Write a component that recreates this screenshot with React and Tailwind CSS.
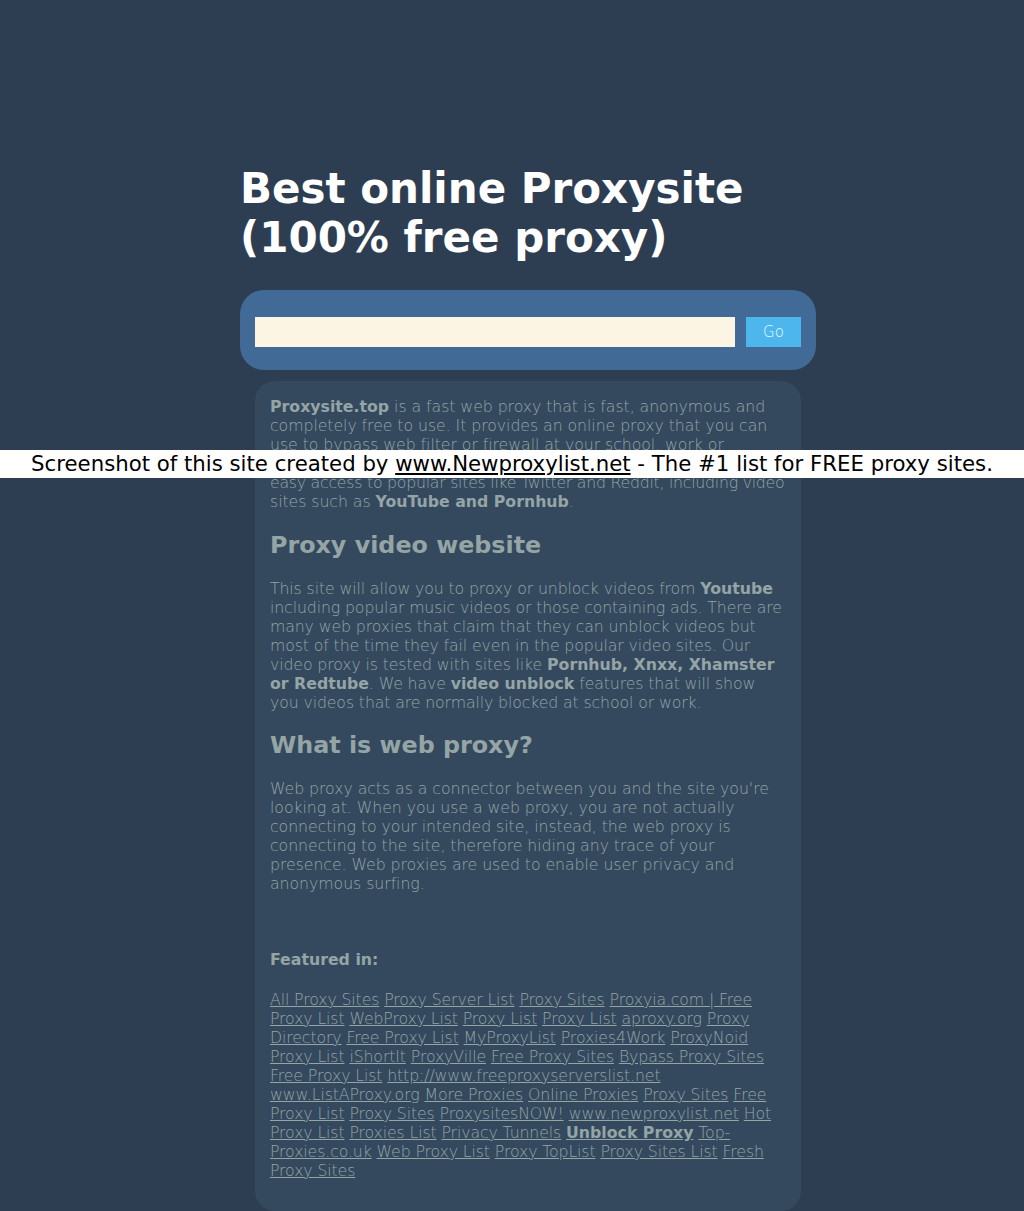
import React from 'react';

const links = [
  'All Proxy Sites', 'Proxy Server List', 'Proxy Sites', 'Proxyia.com | Free Proxy List',
  'WebProxy List', 'Proxy List', 'Proxy List', 'aproxy.org', 'Proxy Directory',
  'Free Proxy List', 'MyProxyList', 'Proxies4Work', 'ProxyNoid Proxy List', 'iShortIt',
  'ProxyVille', 'Free Proxy Sites', 'Bypass Proxy Sites', 'Free Proxy List',
  'http://www.freeproxyserverslist.net', 'www.ListAProxy.org', 'More Proxies',
  'Online Proxies', 'Proxy Sites', 'Free Proxy List', 'Proxy Sites', 'ProxysitesNOW!',
  'www.newproxylist.net', 'Hot Proxy List', 'Proxies List', 'Privacy Tunnels',
  'Unblock Proxy', 'Top-Proxies.co.uk', 'Web Proxy List', 'Proxy TopList',
  'Proxy Sites List', 'Fresh Proxy Sites',
];

function App(){
  return (
    <div className="relative min-h-[1211px] bg-[#2e3e52] font-['DejaVu_Sans',sans-serif] overflow-hidden">
      <div className="ml-[240px] w-[576px] pt-[164px]">
        <h1 className="text-[42px] leading-[49px] font-bold text-white m-0">
          Best online Proxysite (100% free proxy)
        </h1>

        <form className="mt-[28px] bg-[#416a96] rounded-[24px] pt-[27px] pb-[23px] px-[15px] flex gap-[11px]" onSubmit={(e) => e.preventDefault()}>
          <input type="text" className="flex-1 h-[30px] bg-[#fdf5e4] border-0 outline-none px-2" />
          <button type="submit" className="w-[55px] h-[30px] bg-[#4db6ec] text-[#eef6fb] text-[15px] font-extralight">
            Go
          </button>
        </form>

        {/* content card, regular text is a bit narrower than bold in the shot */}
        <div className="mx-[15px] mt-[11px] bg-[#34495e] rounded-[20px] px-[15px] pt-[16px] pb-[31px] text-[#95a5a6] text-[15.75px] leading-[19px] tracking-[-0.12px] font-extralight">
          <p className="tracking-[-0.06px]">
            <b className="font-bold tracking-normal">Proxysite.top</b> is a fast web proxy that is fast, anonymous and completely free to use. It provides an online proxy that you can use to bypass web filter or firewall at your school, work or anywhere else. This proxy site gives you<br />
            <span className="whitespace-nowrap tracking-[-0.25px]">easy access to popular sites like Twitter and Reddit, including video</span><br />
            sites such as <b className="font-bold tracking-normal">YouTube and Pornhub</b>.
          </p>

          <h2 className="text-[23.8px] leading-[28px] font-bold tracking-normal mt-[20px] mb-[20px]">Proxy video website</h2>
          <p>
            This site will allow you to proxy or unblock videos from <b className="font-bold tracking-normal">Youtube</b> including popular music videos or those containing ads. There are many web proxies that claim that they can unblock videos but most of the time they fail even in the popular video sites. Our video proxy is tested with sites like <b className="font-bold tracking-normal">Pornhub, Xnxx, Xhamster or Redtube</b>. We have <b className="font-bold tracking-normal">video unblock</b> features that will show you videos that are normally blocked at school or work.
          </p>

          <h2 className="text-[23.8px] leading-[28px] font-bold tracking-normal mt-[19px] mb-[20px]">What is web proxy?</h2>
          <p className="tracking-[-0.06px]">
            Web proxy acts as a connector between you and the site you're looking at. When you use a web proxy, you are not actually connecting to your intended site, instead, the web proxy is connecting to the site, therefore hiding any trace of your presence. Web proxies are used to enable user privacy and anonymous surfing.
          </p>

          <h4 className="font-bold tracking-normal mt-[57px] mb-[21px]">Featured in:</h4>
          <p>
            {links.map((l, i) => (
              <React.Fragment key={i}>
                <a href="#" className={'underline ' + (l === 'Unblock Proxy' ? 'font-bold tracking-normal' : '')}>{l}</a>{' '}
              </React.Fragment>
            ))}
          </p>
        </div>
      </div>

      <div className="absolute left-0 right-0 top-[450px] h-[28px] bg-white text-black text-[21.25px] leading-[28px] text-center">
        Screenshot of this site created by <a href="#" className="underline">www.Newproxylist.net</a> - The #1 list for FREE proxy sites.
      </div>
    </div>
  );
}

export default App;
